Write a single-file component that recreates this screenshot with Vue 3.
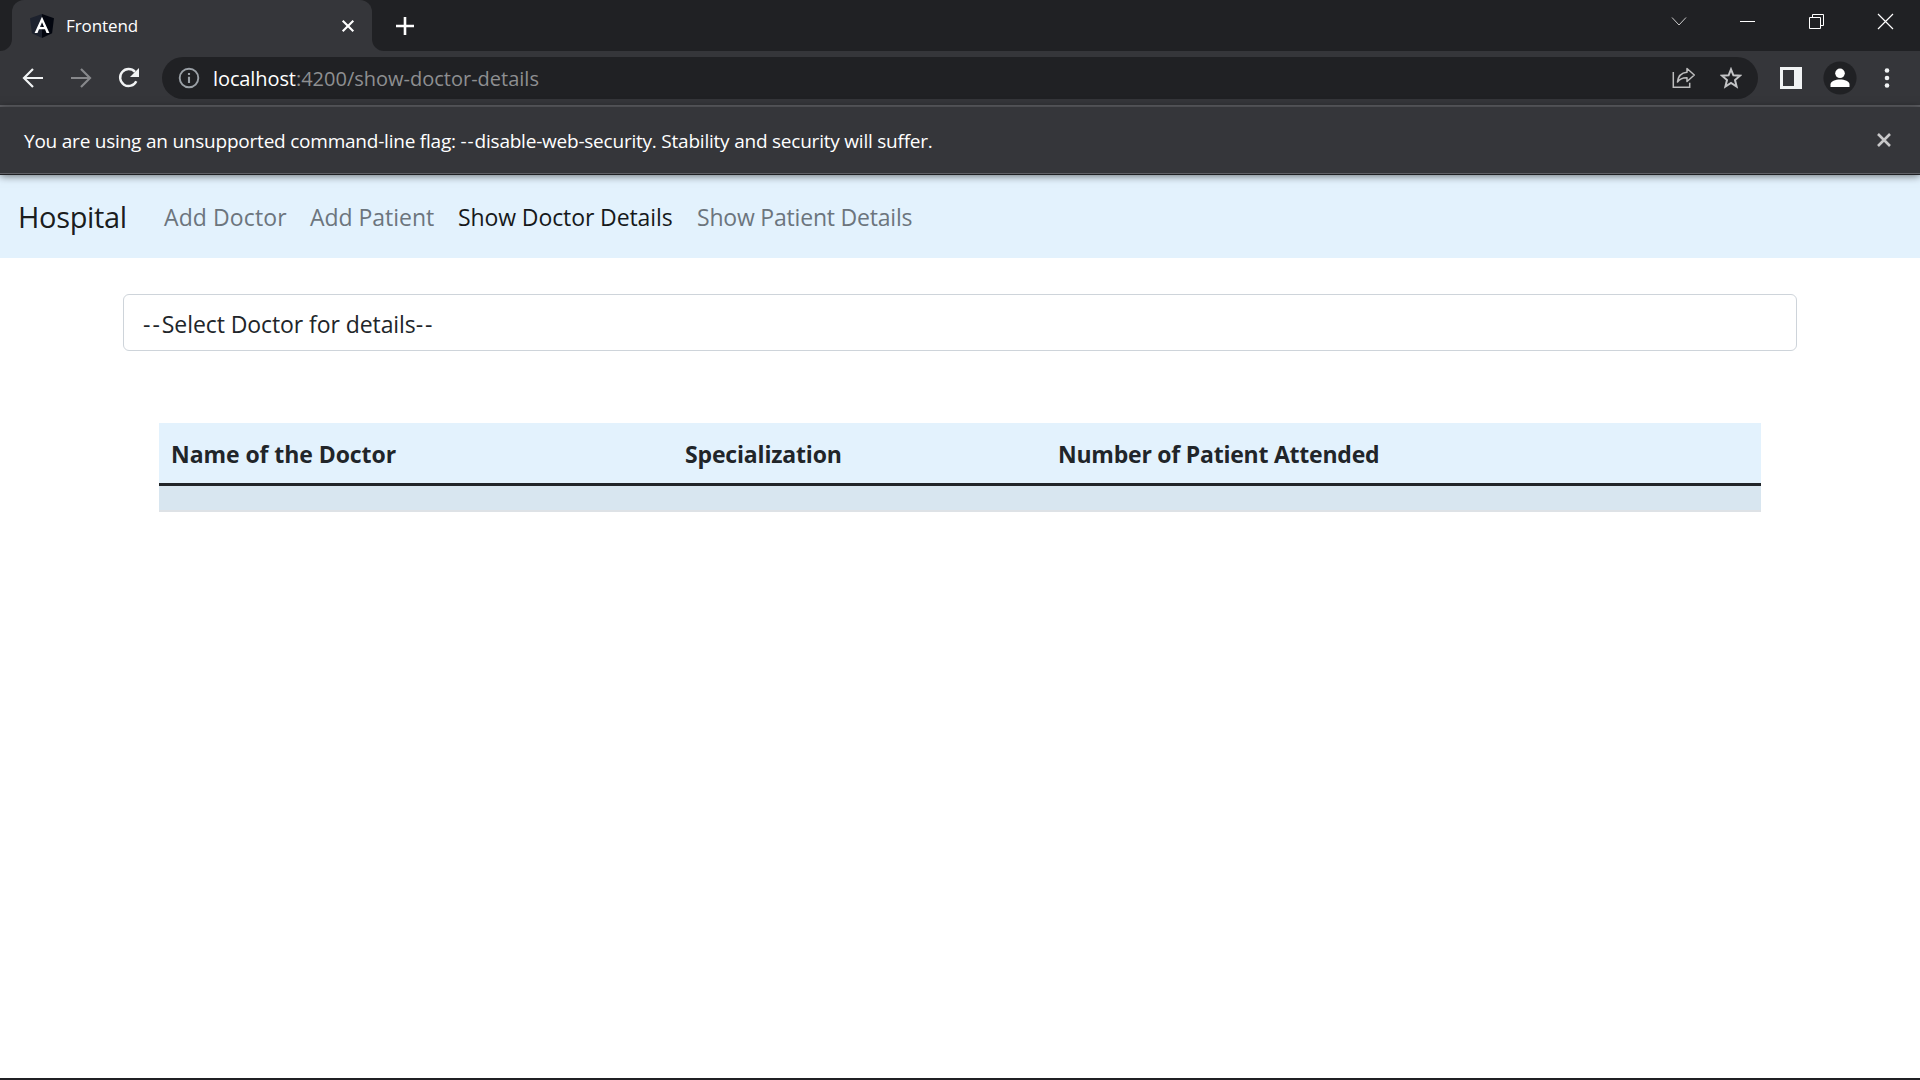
<script setup>
import { ref } from 'vue'

const links = [
  { label: 'Add Doctor', width: 122, spacing: 0.1 },
  { label: 'Add Patient', width: 124, spacing: -0.03 },
  { label: 'Show Doctor Details', width: 215, spacing: -0.1 },
  { label: 'Show Patient Details', width: 215, spacing: -0.2 },
]
const active = ref(2)
</script>

<template>
  <div class="window">
    <header class="tabstrip">
      <div class="edge"></div>
      <div class="tab">
        <svg class="favicon" width="24" height="24" viewBox="0 0 24 24">
          <path d="M12 0 0 4.2 1.9 19.2 12 24Z" fill="#1d222e" />
          <path d="M12 0 24 4.2 22.1 19.2 12 24Z" fill="#03060f" />
          <path fill-rule="evenodd" d="M12 2.7 4.6 19h2.9l1.5-3.7h6L16.5 19h2.9ZM12 8.2l2 4.7h-4Z" fill="#fff" />
        </svg>
        <span class="tab-title">Frontend</span>
        <svg class="tab-close" width="14" height="14" viewBox="0 0 14 14"><path d="M1.7 1.7l10.6 10.6M12.3 1.7 1.7 12.3" stroke="#fff" stroke-width="2.1" /></svg>
      </div>
      <div class="strip-rest">
        <svg class="plus" width="18" height="18" viewBox="0 0 18 18"><path d="M9 0v18M0 9h18" stroke="#fff" stroke-width="2.6" /></svg>
        <div class="controls">
          <svg width="69" height="43" viewBox="0 0 69 43"><path d="M28 17.5l7 7.500 7-7.500" fill="none" stroke="#ccc" stroke-width="1" /></svg>
          <svg width="69" height="43" viewBox="0 0 69 43"><path d="M27 21.5h15" stroke="#fff" /></svg>
          <svg width="69" height="43" viewBox="0 0 69 43"><path d="M27.5 17.5h11v11h-11zM30.5 17.5v-3h11v11h-3" fill="none" stroke="#fff" /></svg>
          <svg width="69" height="43" viewBox="0 0 69 43"><path d="M27 14l15 15M42 14 27 29" stroke="#fff" stroke-width="1.2" /></svg>
        </div>
      </div>
    </header>

    <div class="toolbar">
      <svg width="22" height="22" viewBox="0 0 22 22"><path d="M21 11H3M11 2 2 11l9 9" fill="none" stroke="#f1f3f4" stroke-width="2.2" /></svg>
      <svg class="forward" width="22" height="22" viewBox="0 0 22 22"><path d="M0 11h19M10 2l9 9-9 9" fill="none" stroke="#87888b" stroke-width="2.2" /></svg>
      <svg class="reload" width="22" height="22" viewBox="0 0 22 22">
        <path d="M18.3 14.2A8.5 8.5 0 1 1 17 4.9" fill="none" stroke="#f1f3f4" stroke-width="2.4" />
        <path d="M21 1v9h-9Z" fill="#f1f3f4" />
      </svg>
      <div class="omnibox">
        <svg width="22" height="22" viewBox="0 0 22 22">
          <circle cx="11" cy="11" r="9.3" fill="none" stroke="#9aa0a6" stroke-width="1.9" />
          <path d="M11 9.7V16M11 6v2.1" stroke="#9aa0a6" stroke-width="2.1" />
        </svg>
        <span class="url"><b>localhost</b>:4200/show-doctor-details</span>
        <svg class="share" width="24" height="22" viewBox="0 0 24 22" fill="none" stroke="#bdbdbe" stroke-width="1.5">
          <path d="M1.3 5v15.3h16.4v-4.6" />
          <path d="M15 1.5 22.3 8 15 14.5V10.800C10.500 10.600 7.700 12 5.500 15 6 9.500 9.500 5.700 15 5.200Z" stroke-linejoin="round" />
        </svg>
        <svg class="star" width="22" height="22" viewBox="0 0 22 22"><path d="M11 2.300 13.400 8.300 20 8.700 15 13 16.600 19.500 11 16 5.400 19.500 7 13 2 8.700 8.600 8.300Z" fill="none" stroke="#c3c4c6" stroke-width="2" /></svg>
      </div>
      <svg class="panel" width="22" height="22" viewBox="0 0 22 22"><path fill-rule="evenodd" d="M0 0h22v22H0ZM3 3v16h11V3Z" fill="#f1f3f4" /></svg>
      <svg class="avatar" width="34" height="34" viewBox="0 0 34 34">
        <circle cx="17" cy="17" r="16.600" fill="#202124" />
        <circle cx="17" cy="12.300" r="4.800" fill="#fff" />
        <path d="M7.500 26v-2.500c0-3.500 5-5 9.500-5s9.500 1.500 9.500 5V26Z" fill="#fff" />
      </svg>
      <svg class="dots" width="6" height="22" viewBox="0 0 6 22" fill="#f1f3f4"><circle cx="3" cy="3.500" r="2.300" /><circle cx="3" cy="11" r="2.300" /><circle cx="3" cy="18.500" r="2.300" /></svg>
    </div>

    <div class="infobar">
      <span>You are using an unsupported command-line flag: <span class="dash">--</span>disable-web-security. Stability and security will suffer.</span>
      <svg width="14" height="14" viewBox="0 0 14 14"><path d="M1 1l12 12M13 1 1 13" stroke="#c8c8c9" stroke-width="2.600" /></svg>
    </div>

    <nav class="navbar">
      <a class="brand">Hospital</a>
      <a
        v-for="(link, i) in links"
        :key="link.label"
        class="link"
        :class="{ active: active === i }"
        :style="{ width: link.width + 'px', letterSpacing: link.spacing + 'px' }"
        @click="active = i"
      >{{ link.label }}</a>
    </nav>

    <main class="content">
      <div class="select"><span class="dash">--</span>Select Doctor for details<span class="dash">--</span></div>
      <div class="table">
        <div class="thead">
          <span class="name">Name of the Doctor</span>
          <span class="spec">Specialization</span>
          <span class="count">Number of Patient Attended</span>
        </div>
        <div class="row"></div>
      </div>
    </main>
    <div class="taskbar"></div>
  </div>
</template>

<style>
body { margin: 0; background: #fff; overflow: hidden; }
</style>

<style scoped>
.window { display: flex; flex-direction: column; width: 1920px; height: 1080px; font-family: "Open Sans", "Noto Sans", sans-serif; white-space: nowrap; background: #fff; }
.window svg { display: block; flex: none; }
.tabstrip { display: flex; height: 51px; background: linear-gradient(#202124 0 30px, #35363a 30px); flex: none; }
.edge { width: 12px; background: #202124; border-bottom-right-radius: 12px; }
.tab { display: flex; align-items: center; box-sizing: border-box; width: 360px; padding-left: 18px; background: #35363a; border-radius: 12px 12px 0 0; }
.favicon { margin-top: 1px; }
.tab-title { width: 264px; margin-left: 12px; color: #fff; font-size: 17px; letter-spacing: -0.1px; }
.tab-close { margin-left: 11px; }
.strip-rest { display: flex; flex: 1; background: #202124; border-bottom-left-radius: 12px; }
.plus { margin: 17px 0 0 24px; }
.controls { display: flex; margin-left: auto; }
.toolbar { display: flex; align-items: center; box-sizing: border-box; height: 56px; padding: 6px 0 6px 22px; background: #35363a; border-bottom: 2px solid #606166; flex: none; }
.forward { margin-left: 27px; }
.reload { margin-left: 25px; }
.omnibox { display: flex; align-items: center; box-sizing: border-box; width: 1596px; height: 42px; margin-left: 22px; padding: 0 16px; border-radius: 21px; background: #202124; }
.url { margin-left: 13px; color: #8e8f91; font-size: 20px; }
.url b { color: #fff; font-weight: 400; letter-spacing: -0.1px; }
.share { margin-left: auto; }
.star { margin-left: 24px; }
.panel { margin-left: 22px; }
.avatar { margin-left: 21px; }
.dots { margin-left: 27px; }
.infobar { display: flex; align-items: center; justify-content: space-between; box-sizing: border-box; height: 68px; padding: 0 29px 0 24px; color: #fff; font-size: 19px; letter-spacing: -0.22px; background: #35363a; border-bottom: 1px solid #202124; box-shadow: inset 0 -1px #606166, 0 1px 8px rgba(0, 0, 0, 0.55); position: relative; flex: none; }
.infobar svg { margin-bottom: 2px; }
.infobar .dash { letter-spacing: 0.9px; }
.navbar { display: flex; align-items: center; height: 83px; padding-left: 18px; background: #e3f2fd; flex: none; }
.brand { width: 146px; color: rgba(0, 0, 0, 0.9); font-size: 29px; letter-spacing: -0.33px; }
.link { margin-right: 24px; color: #6c757d; font-size: 23px; cursor: pointer; }
.link.active { color: #16191b; }
.content { flex: 1; padding: 36px 123px 0; color: #212529; font-size: 23px; }
.select { box-sizing: border-box; height: 57px; padding: 3px 0 0 19px; line-height: 52px; border: 1px solid #ced4da; border-radius: 6px; letter-spacing: -0.08px; }
.select .dash { letter-spacing: 2px; }
.table { margin: 72px 36px 0; }
.thead { display: flex; height: 60px; line-height: 62px; padding-left: 12px; background: #e3f2fd; border-bottom: 3px solid #212529; font-weight: 700; }
.name { width: 514px; letter-spacing: -0.07px; }
.spec { width: 373px; letter-spacing: -0.17px; }
.count { letter-spacing: -0.23px; }
.row { height: 24px; background: #d8e6f0; border-bottom: 2px solid #dee2e6; }
.taskbar { height: 2px; background: #202024; flex: none; }
</style>
